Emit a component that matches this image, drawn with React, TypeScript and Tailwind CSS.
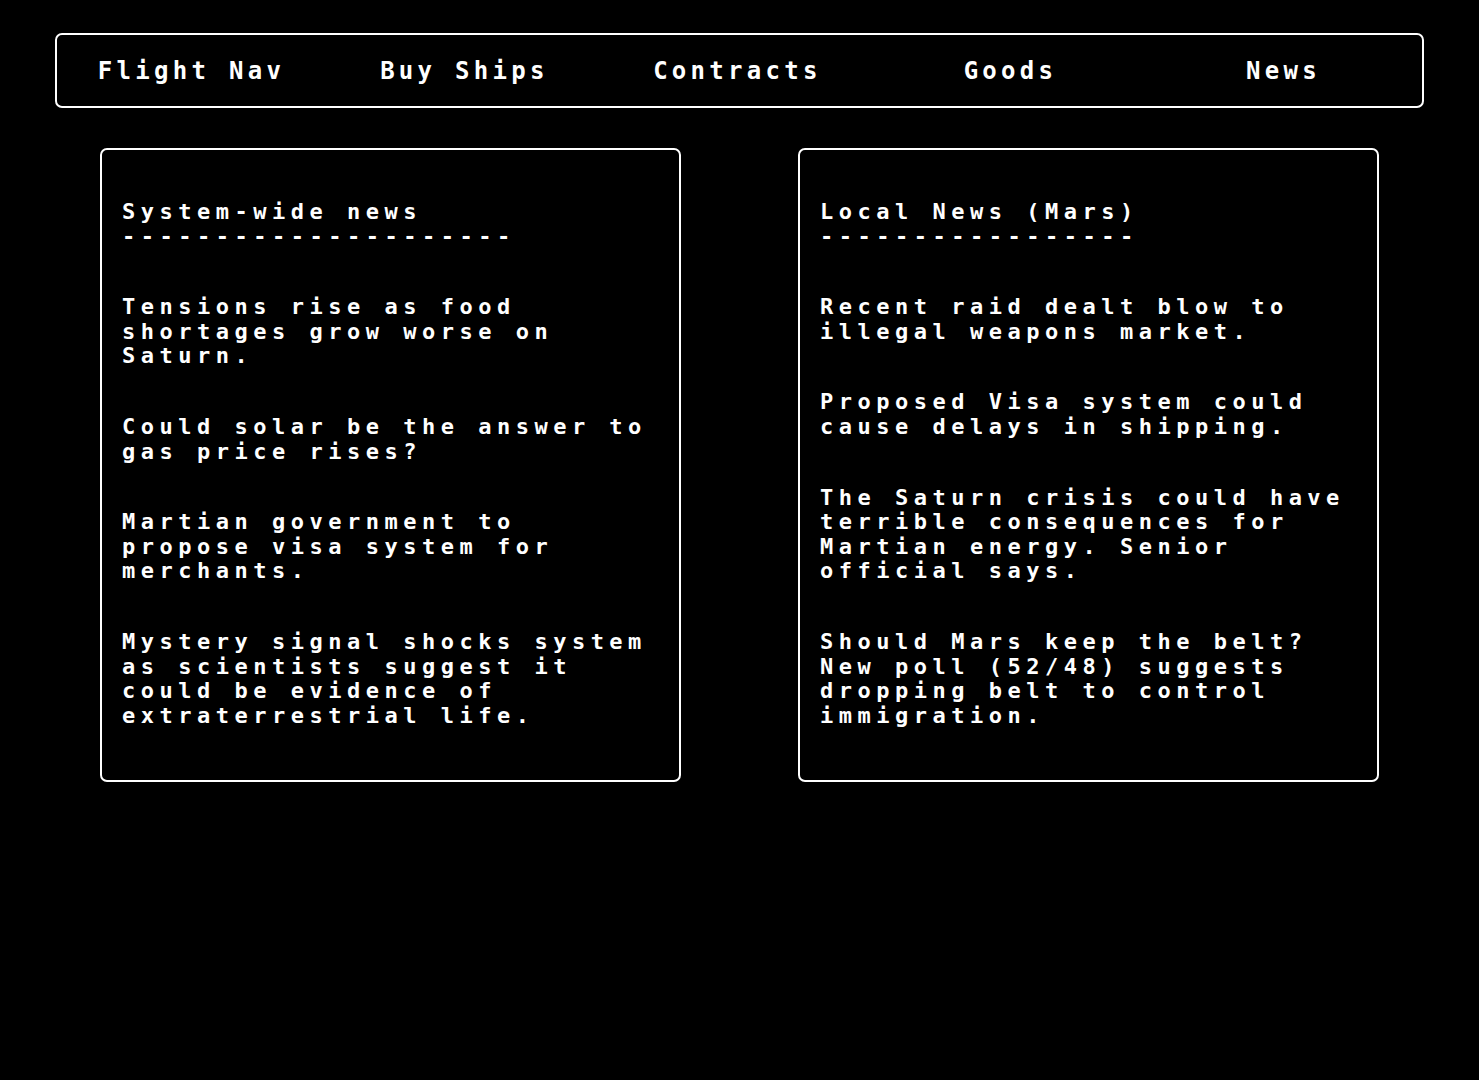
import React from "react";

const navItems = ["Flight Nav", "Buy Ships", "Contracts", "Goods", "News"];

const systemNews = [
  "Tensions rise as food shortages grow worse on Saturn.",
  "Could solar be the answer to gas price rises?",
  "Martian government to propose visa system for merchants.",
  "Mystery signal shocks system as scientists suggest it could be evidence of extraterrestrial life.",
];

const localNews = [
  "Recent raid dealt blow to illegal weapons market.",
  "Proposed Visa system could cause delays in shipping.",
  "The Saturn crisis could have terrible consequences for Martian energy. Senior official says.",
  "Should Mars keep the belt? New poll (52/48) suggests dropping belt to control immigration.",
];

function Panel({ title, items }: { title: string; items: string[] }) {
  return (
    <div className="w-[581px] border-2 border-white rounded-[7px] pt-[50px] pb-[52px] pl-[20px]">
      <div className="w-[528px] flex flex-col gap-[46px] text-[22px] leading-[24.6px] tracking-[5.5px] font-bold text-white">
        <div>
          <div>{title}</div>
          <div className="whitespace-pre">{"-".repeat(title.length + (title.length > 16 ? 0 : 5))}</div>
        </div>
        {items.map((t, i) => (
          <p key={i}>{t}</p>
        ))}
      </div>
    </div>
  );
}

export default function App() {
  return (
    <div
      className="min-h-[1080px] w-full bg-black text-white pt-[33px]"
      style={{ fontFamily: '"DejaVu Sans Mono", "Liberation Mono", monospace' }}
    >
      <nav className="mx-[55px] h-[75px] border-2 border-white rounded-[7px] grid grid-cols-5 items-center">
        {navItems.map((n) => (
          <div key={n} className="text-center text-[24px] font-bold tracking-[4.3px] pr-[4px]">
            {n}
          </div>
        ))}
      </nav>
      <div className="mt-[40px] mx-[100px] flex justify-between">
        <Panel title="System-wide news" items={systemNews} />
        <Panel title="Local News (Mars)" items={localNews} />
      </div>
    </div>
  );
}
